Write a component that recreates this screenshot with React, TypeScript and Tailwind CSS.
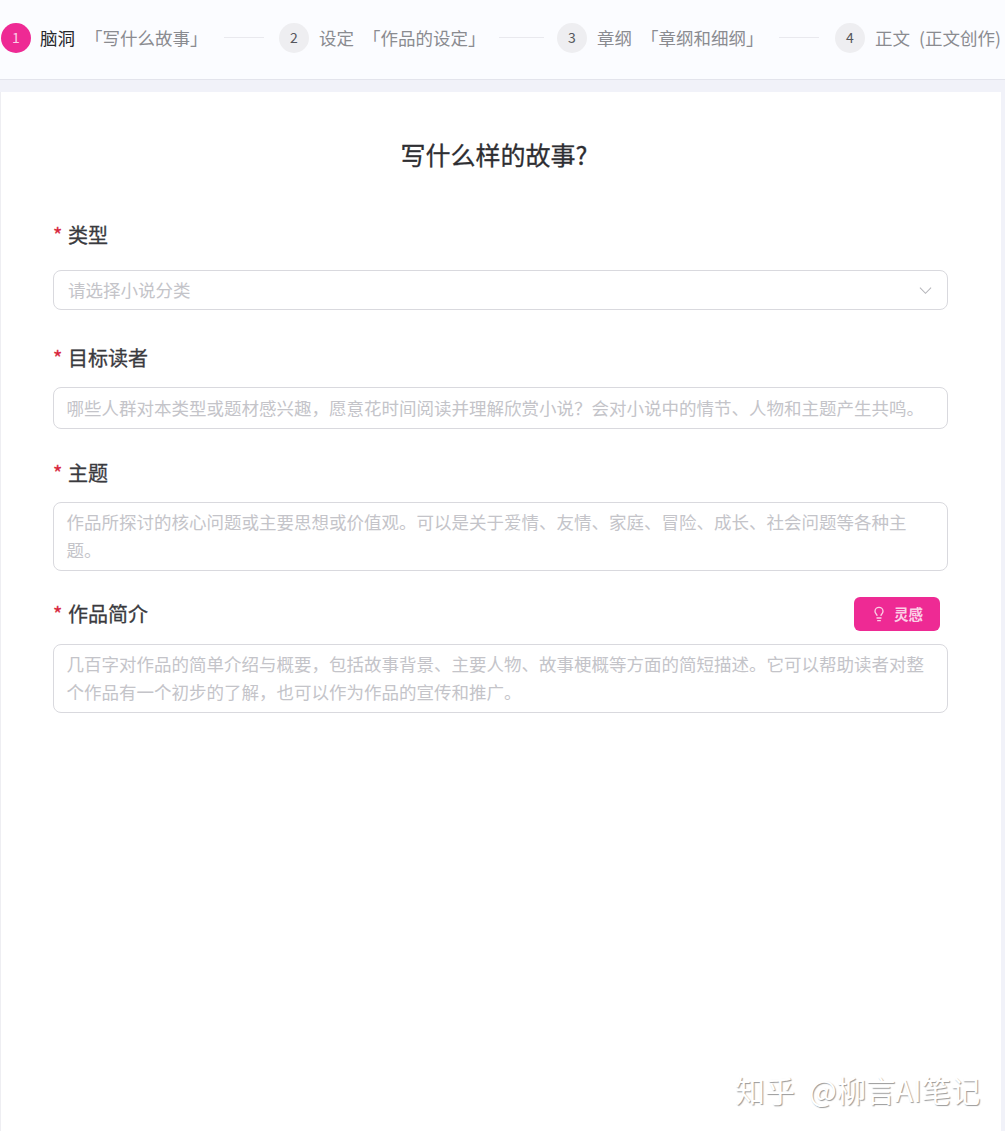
const font = { fontFamily: '"Noto Sans CJK SC", "Noto Sans", sans-serif' };

function Step({ n, title, desc, active, w }: { n: number; title: string; desc: string; active?: boolean; w: string }) {
  return (
    <div className={`flex items-center shrink-0 ${w}`}>
      <div className={`w-[30px] h-[30px] rounded-full flex items-center justify-center text-[14px] shrink-0 ${active ? 'bg-[#ee2a94] text-[#fbd0e6]' : 'bg-[#eeeef1] text-[#55565c]'}`}>{n}</div>
      <span className={`mt-[1px] text-[17.5px] whitespace-nowrap ${active ? 'ml-[9px] text-[#26272b]' : 'ml-[10px] text-[#8a8b90]'}`}>{title}</span>
      <span className={`mt-[1px] text-[17.5px] text-[#8a8b90] whitespace-nowrap ${active ? 'ml-[10px]' : 'ml-[9px]'}`}>{desc}</span>
    </div>
  );
}

function Line({ w }: { w: string }) {
  return <div className={`h-px bg-[#e9e9ee] shrink-0 ${w}`} />;
}

function Label({ text, extra }: { text: string; extra?: React.ReactNode }) {
  return (
    <div className="flex items-center justify-between">
      <div className="flex items-center text-[20px] leading-[28px] text-[#3a3a3e] [-webkit-text-stroke:0.3px_#3a3a3e]">
        <span className="text-[#d8263c] w-[15px] text-[20px] [-webkit-text-stroke:0.3px_#d8263c]">*</span>
        {text}
      </div>
      {extra}
    </div>
  );
}

export default function App() {
  return (
    <div className="w-[1005px] h-[1131px] overflow-hidden bg-[#f1f2f9] flex flex-col" style={font}>
      <header className="h-[80px] shrink-0 bg-[#fbfcff] border-b border-[#e3e4ec] flex items-center pl-px pb-[4px]">
        <Step n={1} title="脑洞" desc="「写什么故事」" active w="w-[223px]" />
        <Line w="w-[40px]" />
        <div className="w-[15px]" />
        <Step n={2} title="设定" desc="「作品的设定」" w="w-[220px]" />
        <Line w="w-[45px]" />
        <div className="w-[13px]" />
        <Step n={3} title="章纲" desc="「章纲和细纲」" w="w-[222px]" />
        <Line w="w-[40px]" />
        <div className="w-[16px]" />
        <div className="flex items-center shrink-0">
          <div className="w-[30px] h-[30px] rounded-full flex items-center justify-center text-[14px] bg-[#eeeef1] text-[#55565c]">4</div>
          <span className="mt-[1px] ml-[10px] text-[17.5px] text-[#8a8b90] whitespace-nowrap">正文</span>
          <span className="mt-[1px] ml-[9px] text-[17.5px] text-[#8a8b90] whitespace-nowrap">(正文创作)</span>
        </div>
      </header>
      <div className="h-[12px] shrink-0" />
      <main className="w-[1001px] flex-1 bg-white border-l border-[#eeeef2] relative">
        <h1 className="text-center text-[25px] text-[#2e2e32] [-webkit-text-stroke:0.3px_#2e2e32] mt-[44px] mr-[14px] leading-[36px]">写什么样的故事?</h1>
        <div className="ml-[52px] w-[895px]">
          <div className="mt-[49px]">
            <Label text="类型" />
          </div>
          <div className="mt-[21px] h-[40px] rounded-[8px] border border-[#d9d9de] flex items-center justify-between pl-[14px] pr-[15px]">
            <span className="text-[17.5px] text-[#c4c4c9]">请选择小说分类</span>
            <svg width="13" height="13" viewBox="0 0 14 14" fill="none" stroke="#b5b5ba" strokeWidth="1.1"><path d="M1 4l6 6 6-6" /></svg>
          </div>
          <div className="mt-[34px]">
            <Label text="目标读者" />
          </div>
          <div className="mt-[15px] h-[42px] rounded-[8px] border border-[#d9d9de] flex items-center pl-[12.5px] overflow-hidden">
            <span className="text-[17.5px] text-[#c4c4c9] whitespace-nowrap">哪些人群对本类型或题材感兴趣，愿意花时间阅读并理解欣赏小说？会对小说中的情节、人物和主题产生共鸣。</span>
          </div>
          <div className="mt-[30px]">
            <Label text="主题" />
          </div>
          <div className="mt-[15px] h-[69px] rounded-[8px] border border-[#d9d9de] pl-[12.5px] pr-[38px] pt-[5px] text-[17.5px] leading-[28px] text-[#c4c4c9]">
            作品所探讨的核心问题或主要思想或价值观。可以是关于爱情、友情、家庭、冒险、成长、社会问题等各种主题。
          </div>
          <div className="mt-[26px] pr-[8px]">
            <Label
              text="作品简介"
              extra={
                <button className="w-[86px] h-[34px] rounded-[6px] bg-[#ee2a94] text-[#fbd0e6] flex items-center justify-center gap-[7px] text-[14.5px] font-bold">
                  <svg width="16" height="16" viewBox="0 0 24 24" fill="none" stroke="currentColor" strokeWidth="2" strokeLinecap="round" strokeLinejoin="round">
                    <path d="M15 14c.2-1 .7-1.7 1.5-2.5 1-.9 1.5-2.2 1.5-3.5A6 6 0 0 0 6 8c0 1 .2 2.2 1.5 3.5.7.7 1.3 1.5 1.5 2.5" />
                    <path d="M9 18h6" />
                    <path d="M10 22h4" />
                  </svg>
                  灵感
                </button>
              }
            />
          </div>
          <div className="mt-[13px] h-[69px] rounded-[8px] border border-[#d9d9de] pl-[12.5px] pr-[20px] pt-[5px] text-[17.5px] leading-[28px] text-[#c4c4c9]">
            几百字对作品的简单介绍与概要，包括故事背景、主要人物、故事梗概等方面的简短描述。它可以帮助读者对整个作品有一个初步的了解，也可以作为作品的宣传和推广。
          </div>
        </div>
        <div className="absolute left-[734px] top-[975px] flex items-center text-[30px] text-white whitespace-nowrap [text-shadow:1px_1px_1px_#9a9a9a]">
          <span>知乎</span>
          <span className="ml-[14px] text-[29.3px]">@柳言AI笔记</span>
        </div>
      </main>
    </div>
  );
}
